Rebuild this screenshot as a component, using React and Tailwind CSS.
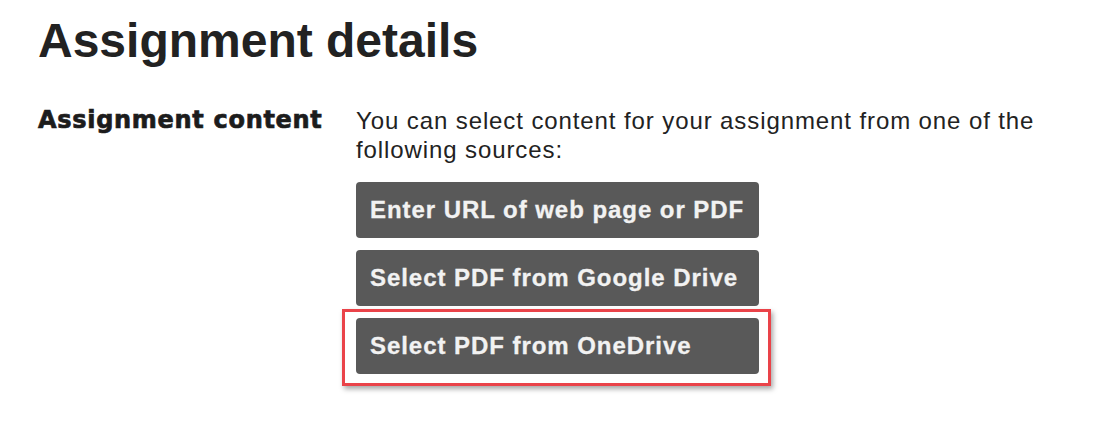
const SOURCES = [
  "Enter URL of web page or PDF",
  "Select PDF from Google Drive",
  "Select PDF from OneDrive",
];

const SourceButton = ({ label, highlighted }) => {
  return (
    <div className="relative">
      {highlighted && (
        <div className="pointer-events-none absolute -left-[14px] -top-[9px] -right-[12px] -bottom-[12px] border-[3px] border-[#ea4349] shadow-[2px_3px_5px_rgba(0,0,0,0.35)]" />
      )}
      <button
        type="button"
        className="relative flex h-14 w-full items-center rounded bg-[#595959] pl-[14px] pr-[15px] text-left text-[24px] font-bold tracking-[0.95px] text-[#f2f2f2] [-webkit-text-stroke:0.3px_#f2f2f2]"
      >
        {label}
      </button>
    </div>
  );
};

export default function App() {
  return (
    <div className="min-h-[431px] bg-white pl-[38px] pt-[12px] font-['Liberation_Sans',Arial,sans-serif] text-[#222]">
      <h1 className="text-[48px] font-bold leading-[57.6px]">Assignment details</h1>

      <div className="mt-[36px] grid grid-cols-[318px_1fr]">
        <div className="font-['DejaVu_Sans',sans-serif] text-[24px] font-bold leading-[28.8px] tracking-[0.7px] text-[#1c1c1c] [-webkit-text-stroke:0.7px_#1c1c1c]">
          Assignment content
        </div>
        <div>
          <p className="w-[700px] text-[24px] leading-[29px] tracking-[0.9px]">
            You can select content for your assignment from one of the following sources:
          </p>
          <div className="mt-[18px] inline-flex flex-col gap-3">
            {SOURCES.map((s, i) => (
              <SourceButton key={s} label={s} highlighted={i === 2} />
            ))}
          </div>
        </div>
      </div>
    </div>
  );
}
